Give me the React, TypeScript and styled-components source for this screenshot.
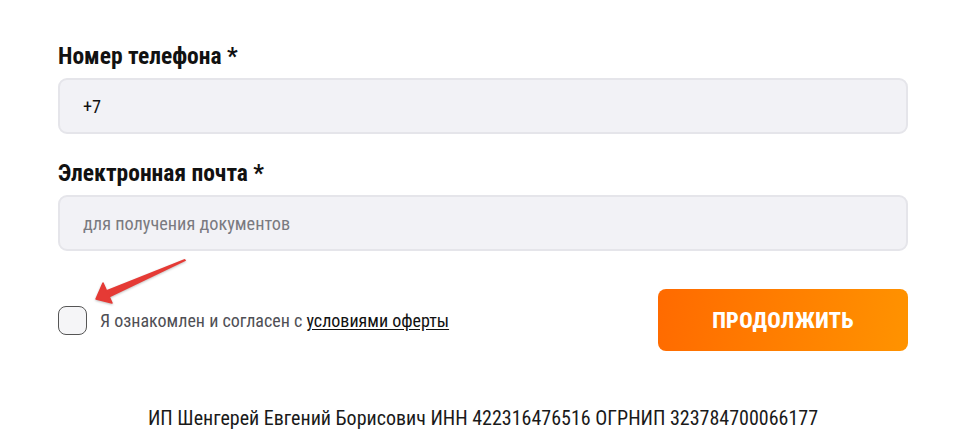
import React from "react";
import styled, { createGlobalStyle } from "styled-components";

const Global = createGlobalStyle`
  html, body { margin: 0; padding: 0; background: #fff; }
  body { font-family: "Roboto", "Liberation Sans", sans-serif; font-stretch: condensed; }
  * { box-sizing: border-box; }
`;

const Page = styled.div`
  width: 972px;
  height: 437px;
  padding: 43px 64px 0 58px;
  position: relative;
  display: flex;
  flex-direction: column;
`;

const Field = styled.div`
  display: flex;
  flex-direction: column;
  gap: 8px;
  margin-bottom: 26px;
`;

const Label = styled.label`
  font-size: 23.5px;
  font-weight: 700;
  color: #111;
  line-height: 27px;
`;

const Input = styled.input`
  width: 850px;
  height: 56px;
  border: 2px solid #e5e5ea;
  border-radius: 9px;
  background: #f2f2f6;
  padding: 0 23px;
  font-family: inherit;
  font-stretch: condensed;
  font-size: 18.3px;
  color: #111;
  outline: none;
  &::placeholder { color: #7a7a80; }
`;

const BottomRow = styled.div`
  display: flex;
  align-items: center;
  justify-content: space-between;
  margin-top: 12px;
  width: 850px;
`;

const Agree = styled.label`
  display: flex;
  align-items: center;
  gap: 13px;
  margin-top: 1px;
  font-size: 18px;
  color: #4f4f55;
`;

const Box = styled.span`
  width: 29px;
  height: 29px;
  border: 1.5px solid #555;
  border-radius: 8px;
  background: #f5f5f7;
`;

const Link = styled.a`
  color: #111;
  text-decoration: underline;
  text-underline-offset: 2px;
`;

const Button = styled.button`
  width: 250px;
  height: 62px;
  border: none;
  border-radius: 8px;
  background: linear-gradient(100deg, #ff6a00 0%, #ff9300 100%);
  color: #fff;
  font-family: inherit;
  font-stretch: condensed;
  font-weight: 800;
  font-size: 22.3px;
  letter-spacing: 0.3px;
`;

const Footer = styled.div`
  text-align: center;
  font-size: 20px;
  line-height: 24px;
  color: #1a1a1a;
  margin-top: 55px;
  width: 850px;
`;

const Arrow = styled.svg`
  position: absolute;
  left: 90px;
  top: 255px;
  filter: drop-shadow(0 1px 1px rgba(0, 0, 0, 0.25));
`;

export default function App() {
  return (
    <>
      <Global />
      <Page>
        <Field>
          <Label>Номер телефона *</Label>
          <Input defaultValue="+7" />
        </Field>
        <Field>
          <Label>Электронная почта *</Label>
          <Input placeholder="для получения документов" />
        </Field>
        <BottomRow>
          <Agree>
            <Box />
            <span>
              Я ознакомлен и согласен с <Link href="#">условиями оферты</Link>
            </span>
          </Agree>
          <Button>ПРОДОЛЖИТЬ</Button>
        </BottomRow>
        <Footer>ИП Шенгерей Евгений Борисович ИНН 422316476516 ОГРНИП 323784700066177</Footer>
        <Arrow width="105" height="55" viewBox="0 0 105 55">
          <polygon
            points="94.6,4.1 96.2,5.2 95.4,5.9 17.8,43.3 14.2,35.9"
            fill="#e53a35"
          />
          <polygon
            points="6,44 13,28 22,48"
            fill="#e53a35"
            stroke="#e53a35"
            strokeWidth="1.5"
            strokeLinejoin="round"
          />
        </Arrow>
      </Page>
    </>
  );
}
